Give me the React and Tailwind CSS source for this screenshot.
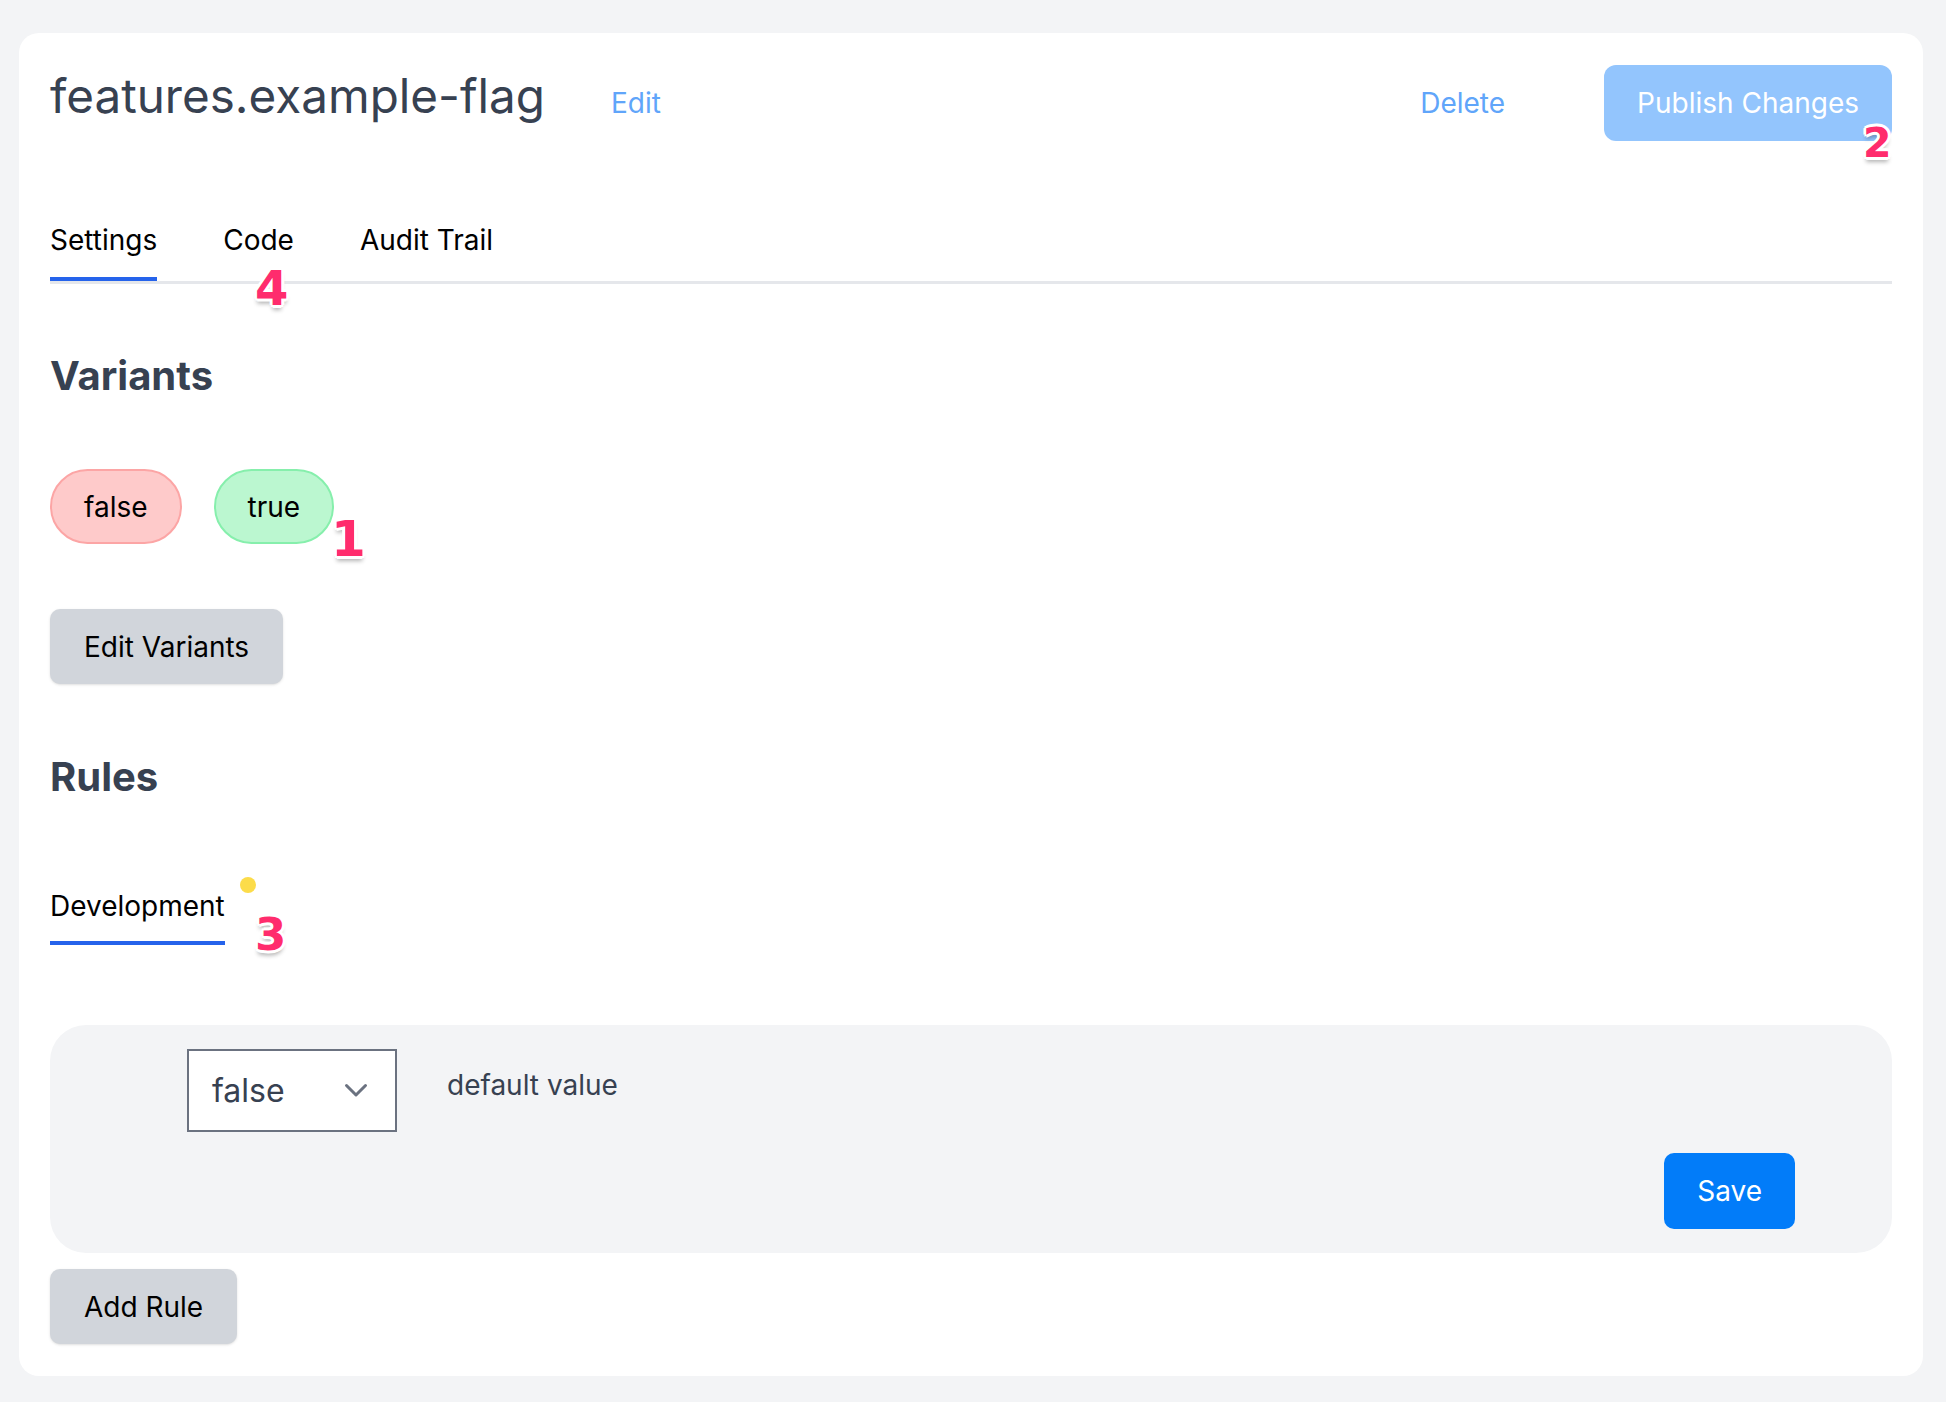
const Marker = ({ n, className }) => (
  <span
    className={`absolute leading-none font-bold text-[#ff2c6d] [font-family:'DejaVu_Sans',sans-serif] [text-shadow:3px_0_0_#fff,-3px_0_0_#fff,0_3px_0_#fff,0_-3px_0_#fff,2px_2px_0_#fff,-2px_-2px_0_#fff,2px_-2px_0_#fff,-2px_2px_0_#fff,0_5px_4px_rgba(0,0,0,0.3)] ${className}`}
  >
    {n}
  </span>
);

const GrayButton = ({ children }) => (
  <button className="h-[75px] px-[34px] rounded-[10px] bg-[#d1d5db] text-black text-[28px] leading-[40px] shadow-sm flex items-center">
    {children}
  </button>
);

const Chevron = () => (
  <svg width="24" height="15" viewBox="0 0 24 15" fill="none">
    <path d="M2.5 2.5 L12 12 L21.5 2.5" stroke="#6b7280" strokeWidth="3" strokeLinecap="round" strokeLinejoin="round" />
  </svg>
);

export default function App() {
  const tabs = ["Settings", "Code", "Audit Trail"];

  return (
    <div className="relative min-h-[1402px] bg-[#f3f4f6] pt-[33px] [font-family:Inter,sans-serif]">
      <div className="ml-[19px] w-[1904px] bg-white rounded-[20px] px-[31px] pt-[32px] pb-[32px]">
        {/* header */}
        <div className="flex items-baseline">
          <h1 className="mt-[3px] text-[47.6px] leading-[56px] text-[#374151]">features.example-flag</h1>
          <a className="ml-[66px] text-[28px] leading-[40px] text-[#60a5fa]">Edit</a>
          <a className="ml-auto text-[28px] leading-[40px] text-[#60a5fa]">Delete</a>
          <button className="ml-[99px] h-[76px] px-[33px] rounded-[12px] bg-[#93c5fd] text-white text-[28px] leading-[40px] flex items-center">
            Publish Changes
          </button>
        </div>

        {/* tabs */}
        <div className="mt-[79px] flex gap-[66px] border-b-[3px] border-[#e5e7eb]">
          {tabs.map((t, i) => (
            <div
              key={t}
              className={`text-[28px] leading-[40px] pb-[17px] border-b-4 text-black ${i === 0 ? "border-[#2563eb]" : "border-transparent"}`}
            >
              {t}
            </div>
          ))}
        </div>

        {/* variants */}
        <h2 className="mt-[68px] text-[40px] leading-[48px] font-bold text-[#374151]">Variants</h2>
        <div className="mt-[69px] flex gap-[32px]">
          <span className="h-[75px] px-[32px] rounded-full border-2 border-[#fca5a5] bg-[#fecaca] text-[28px] text-black flex items-center">
            false
          </span>
          <span className="h-[75px] px-[32px] rounded-full border-2 border-[#86efac] bg-[#bbf7d0] text-[28px] text-black flex items-center">
            true
          </span>
        </div>
        <div className="mt-[65px] flex">
          <GrayButton>Edit Variants</GrayButton>
        </div>

        {/* rules */}
        <h2 className="mt-[69px] text-[40px] leading-[48px] font-bold text-[#374151]">Rules</h2>
        <div className="mt-[85px] flex">
          <div className="relative text-[28px] leading-[40px] pb-[15px] border-b-4 border-[#2563eb] text-black">
            Development
            <span className="absolute left-[190px] top-[-9px] w-4 h-4 rounded-full bg-[#fcdc4a]" />
          </div>
        </div>

        <div className="mt-[80px] rounded-[36px] bg-[#f3f4f6] p-6">
          <div className="flex items-start pl-[113px] gap-[50px]">
            <div className="w-[210px] h-[83px] border-2 border-[#6b7280] bg-white flex items-center justify-between pl-[23px] pr-[27px]">
              <span className="text-[32px] text-[#374151]">false</span>
              <Chevron />
            </div>
            <span className="mt-[16px] text-[28px] leading-[40px] text-[#374151]">default value</span>
          </div>
          <div className="mt-[21px] flex justify-end pr-[73px]">
            <button className="h-[76px] px-[33px] rounded-[10px] bg-[#027cf9] text-white text-[28px] leading-[40px] flex items-center">
              Save
            </button>
          </div>
        </div>

        <div className="mt-[16px] flex">
          <GrayButton>Add Rule</GrayButton>
        </div>
      </div>

      <Marker n="2" className="left-[1863px] top-[123px] text-[41px]" />
      <Marker n="4" className="left-[255px] top-[264px] text-[48px]" />
      <Marker n="1" className="left-[331px] top-[514px] text-[50px]" />
      <Marker n="3" className="left-[255px] top-[912px] text-[45px]" />
    </div>
  );
}
